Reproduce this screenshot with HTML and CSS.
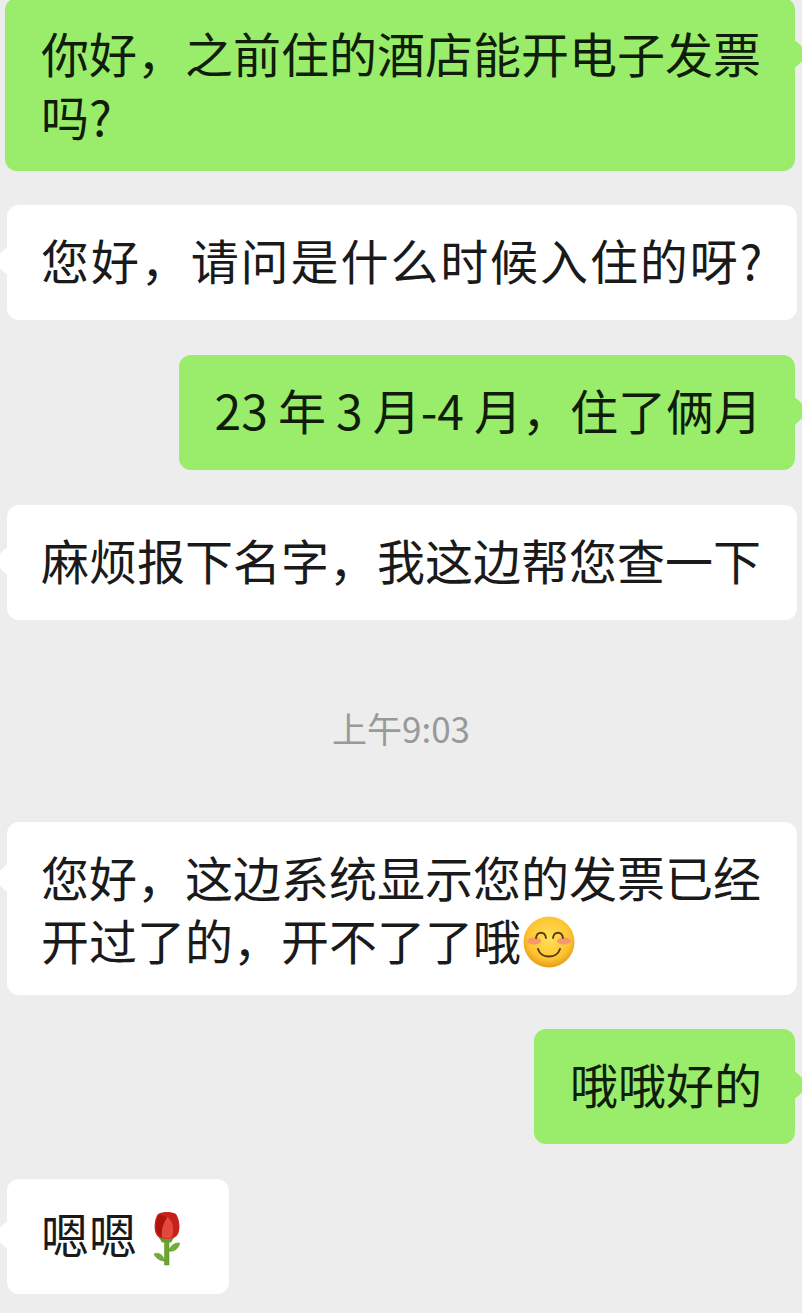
FILE: index.html
```html
<!DOCTYPE html>
<html lang="zh-CN">
<head>
<meta charset="utf-8">
<title>聊天记录</title>
<link rel="stylesheet" href="styles.css">
</head>
<body>
<main class="chat">
  <div class="row row-me first"><p class="bubble me wide two">你好，之前住的酒店能开电子发票<br>吗?</p></div>
  <div class="row row-them"><p class="bubble them wide stretch">您好，请问是什么时候入住的呀?</p></div>
  <div class="row row-me"><p class="bubble me tight-words">23 年 3 月-4 月，住了俩月</p></div>
  <div class="row row-them"><p class="bubble them wide">麻烦报下名字，我这边帮您查一下</p></div>
  <div class="time">上午9:03</div>
  <div class="row row-them"><p class="bubble them wide two">您好，这边系统显示您的发票已经<br>开过了的，开不了了哦<svg class="emoji smile" viewBox="0 0 52 52" aria-hidden="true"><defs><radialGradient id="sg" cx="50%" cy="42%" r="58%"><stop offset="0" stop-color="#ffe05a"/><stop offset="0.72" stop-color="#fcc530"/><stop offset="1" stop-color="#e99a18"/></radialGradient></defs><circle cx="26" cy="26" r="25.5" fill="url(#sg)"/><ellipse cx="11" cy="25" rx="7" ry="3.6" fill="#f7986a"/><ellipse cx="41" cy="25" rx="7" ry="3.6" fill="#f7986a"/><path d="M13 22c1-7 9-7 10 0M30 22c1-7 9-7 10 0" fill="none" stroke="#5a3710" stroke-width="1.8" stroke-linecap="round"/><path d="M15 33c3 10 19 10 22 0" fill="none" stroke="#5a3710" stroke-width="1.9" stroke-linecap="round"/></svg></p></div>
  <div class="row row-me nudge"><p class="bubble me">哦哦好的</p></div>
  <div class="row row-them"><p class="bubble them rose-bubble">嗯嗯<svg class="emoji rose" viewBox="0 0 27 54" aria-hidden="true"><path d="M11.500 26h4.500v27h-4.500z" fill="#6fa52c" stroke="#528a20" stroke-width=".5"/><path d="M16 39c1-5 5-8 10.500-8-.5 5-5 9-10.500 8zM11.500 49C7 49 3 46 1 42c5-2 9.500 1 10.500 7z" fill="#72b034" stroke="#4f8a22" stroke-width=".6"/><path d="M5 24c4 3 13 3 17 0l-4 6.500h-9z" fill="#63a02c"/><path d="M14 0c3 0 6 .5 9 2 3 4 4 12 3 17-1 6-6 8-12 8S3 25 2 19C1 13 2 6 5 2c3-1.500 6-2 9-2z" fill="#c8201b"/><path d="M14 5c5 3 8 10 5 20-3 2-8 2-10 0-3-9 0-17 5-20z" fill="#e4483a"/><path d="M6 3c3 0 6 1 8 3-3 4-6 10-5 19-4-2-6-6-6-10 0-5 1-9 3-12z" fill="#ae130e"/></svg></p></div>
</main>
</body>
</html>
```
FILE: styles.css
```css
* { box-sizing: border-box; }
html, body { margin: 0; height: 1313px; overflow: hidden; background: #ededed; }
body { font-family: "Noto Sans CJK SC", "Liberation Sans", sans-serif; }
.chat { display: flex; flex-direction: column; gap: 35px; }
.row { display: flex; }
.row-me { justify-content: flex-end; padding-right: 7px; }
.row-them { justify-content: flex-start; padding-left: 7px; }
.first { margin-top: -2px; margin-bottom: -1px; }
.nudge { margin-top: -1px; }
.bubble {
  position: relative;
  margin: 0;
  height: 115px;
  border-radius: 12px;
  font-size: 48px;
  line-height: 63px;
  white-space: nowrap;
}
.me { padding: 23px 33px 0 36px; background: #99ed6b; color: #0f1d0a; }
.them { padding: 23px 36px 0 34px; background: #fff; color: #1a1a1a; }
.wide { width: 790px; }
.two { height: 173px; }
.stretch { letter-spacing: 1.9px; }
.tight-words { word-spacing: -0.7px; }
.rose-bubble { padding-right: 49px; }
.me::after, .them::before {
  content: "";
  position: absolute;
  top: 46px;
  width: 20px;
  height: 20px;
  border-radius: 3px;
  transform: rotate(45deg);
}
.me::after { right: -10px; background: #99ed6b; }
.them::before { left: -10px; background: #fff; }
.time {
  margin: 48px 0 34px;
  height: 50px;
  text-align: center;
  font-size: 35px;
  line-height: 50px;
  color: #999;
}
.emoji { display: inline-block; vertical-align: middle; }
.smile { width: 52px; height: 52px; margin: -10px 0 0 2px; }
.rose { width: 27px; height: 54px; margin: -4px 0 0 16px; }
```
